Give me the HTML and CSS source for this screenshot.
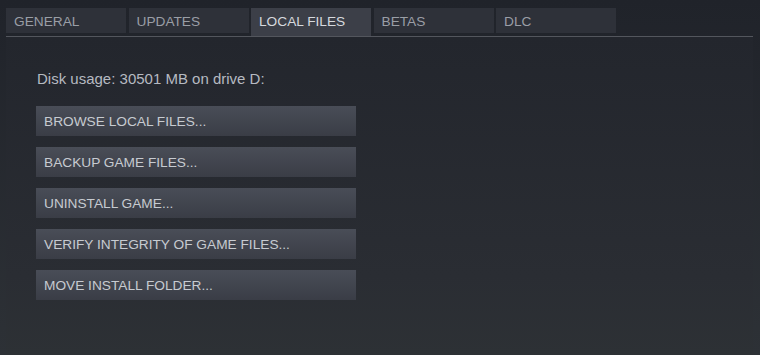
FILE: index.html
```html
<!DOCTYPE html>
<html>
<head>
    <title>Properties - Local Files</title>
    <link rel="stylesheet" href="styles.css">
</head>
<body>
    <div class="tab-bar">
        <div class="tab">GENERAL</div>
        <div class="tab">UPDATES</div>
        <div class="tab active">LOCAL FILES</div>
        <div class="tab">BETAS</div>
        <div class="tab">DLC</div>
    </div>

    <div class="panel">
        <p class="disk-usage">Disk usage: 30501 MB on drive D:</p>
        <button class="btn">BROWSE LOCAL FILES...</button>
        <button class="btn">BACKUP GAME FILES...</button>
        <button class="btn">UNINSTALL GAME...</button>
        <button class="btn">VERIFY INTEGRITY OF GAME FILES...</button>
        <button class="btn">MOVE INSTALL FOLDER...</button>
    </div>
</body>
</html>
```

FILE: styles.css
```css
html, body { height: 100%; }
body {
    margin: 0;
    font-family: "Liberation Sans", Arial, sans-serif;
    background: linear-gradient(#20232a, #2d3136);
    display: flex;
    flex-direction: column;
}
.tab-bar {
    display: flex;
    align-items: flex-start;
    gap: 2.5px;
    height: 28px;
    padding-top: 8px;
    margin: 0 7px 0 6px;
    border-bottom: 1px solid #53565d;
}
.tab {
    width: 120px;
    height: 25px;
    line-height: 27px;
    padding-left: 8px;
    box-sizing: border-box;
    font-size: 13.7px;
    color: #9a9ea6;
    background: #2e3139;
}
.tab.active {
    height: 28px;
    color: #d6d9de;
    background: #3c3f48;
}
.panel {
    flex: 1;
    margin: 0 7px 0 6px;
    padding: 33px 0 0 30px;
    background: linear-gradient(#23262d, #2a2d33 75%, #2d3135);
    display: flex;
    flex-direction: column;
    align-items: flex-start;
}
.disk-usage {
    margin: 0 0 18px 1px;
    font-size: 15px;
    line-height: 18px;
    color: #b6bac1;
}
.btn {
    width: 320px;
    height: 30px;
    margin-bottom: 11px;
    padding: 1px 0 0 8px;
    text-align: left;
    font-family: inherit;
    font-size: 13.7px;
    color: #c7cbd1;
    background: linear-gradient(#494d57, #3a3d46);
    border: none;
    cursor: pointer;
}
```
